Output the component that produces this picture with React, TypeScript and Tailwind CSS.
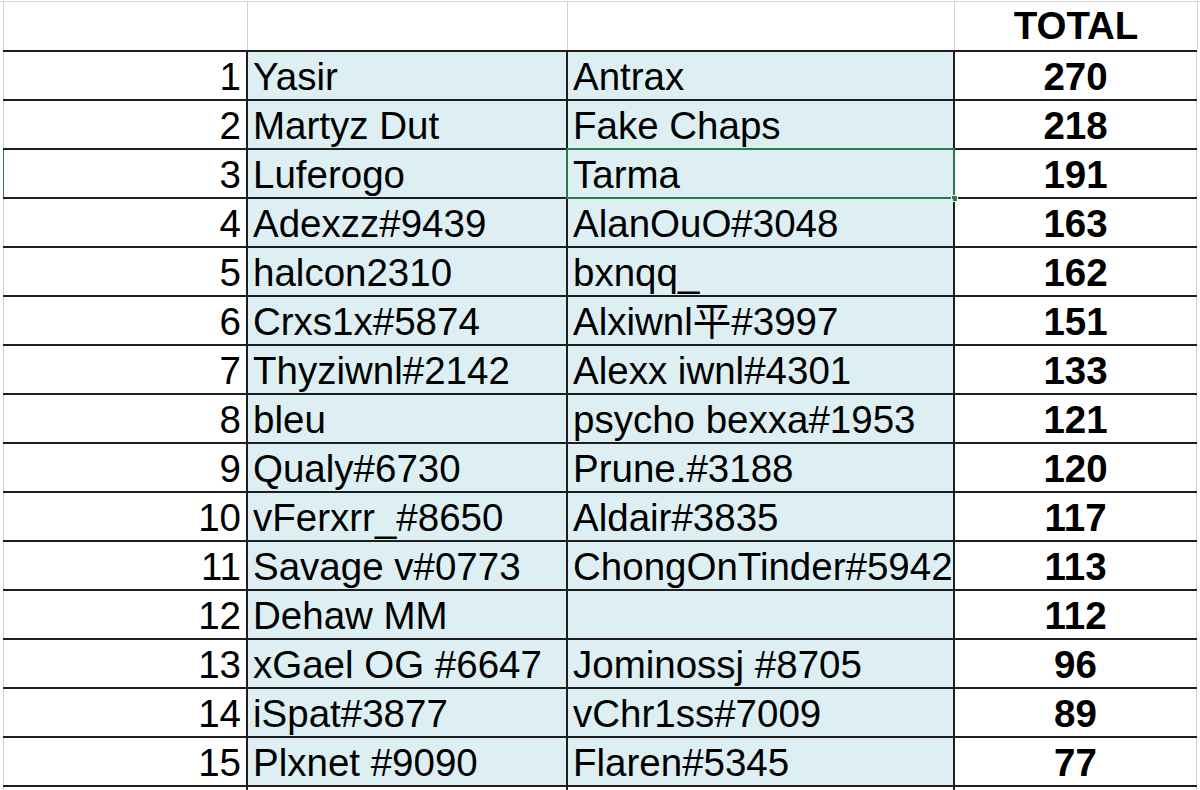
import React from "react";

const rows: [number, string, string, number][] = [
  [1, "Yasir", "Antrax", 270],
  [2, "Martyz Dut", "Fake Chaps", 218],
  [3, "Luferogo", "Tarma", 191],
  [4, "Adexzz#9439", "AlanOuO#3048", 163],
  [5, "halcon2310", "bxnqq_", 162],
  [6, "Crxs1x#5874", "Alxiwnl平#3997", 151],
  [7, "Thyziwnl#2142", "Alexx iwnl#4301", 133],
  [8, "bleu", "psycho bexxa#1953", 121],
  [9, "Qualy#6730", "Prune.#3188", 120],
  [10, "vFerxrr_#8650", "Aldair#3835", 117],
  [11, "Savage v#0773", "ChongOnTinder#5942", 113],
  [12, "Dehaw MM", "", 112],
  [13, "xGael OG #6647", "Jominossj #8705", 96],
  [14, "iSpat#3877", "vChr1ss#7009", 89],
  [15, "Plxnet #9090", "Flaren#5345", 77],
];

function Dark() {
  return <div className="w-[2px] shrink-0 self-stretch bg-[#1e1e1e]" />;
}
function Gray({ green }: { green?: boolean }) {
  return (
    <div
      className={
        "w-[1px] shrink-0 self-stretch " + (green ? "bg-[#2f7a4b]" : "bg-[#d2d2d2]")
      }
    />
  );
}

export default function App() {
  return (
    <div className="w-[1200px] h-[790px] overflow-hidden bg-white text-black text-[38.5px] leading-[49px] font-['Liberation_Sans','Noto_Sans_CJK_SC',Arial,sans-serif]">
      {/* top gray gridline */}
      <div className="h-[1px] bg-white" />
      <div className="h-[1px] bg-[#d6d6d6]" />
      {/* header row */}
      <div className="flex h-[48px] pl-[3px]">
        <Gray />
        <div className="w-[243px] shrink-0" />
        <Gray />
        <div className="w-[319px] shrink-0" />
        <Gray />
        <div className="w-[386px] shrink-0" />
        <Gray />
        <div className="w-[242px] shrink-0 text-center font-bold leading-[47px]">TOTAL</div>
        <Gray />
      </div>
      <div className="ml-[3px] w-[1194px] h-[2px] bg-[#1e1e1e]" />
      {rows.map(([n, a, b, t]) => {
        const sel = n === 3;
        return (
          <div key={n}>
            <div className="flex h-[47px] pl-[3px]">
              <Gray green={sel} />
              <div className="w-[242px] shrink-0 text-right pr-[5px] whitespace-nowrap">{n}</div>
              <Dark />
              <div className="w-[318px] shrink-0 bg-[#ddeff2] pl-[5px] whitespace-nowrap overflow-hidden">
                {a}
              </div>
              <Dark />
              <div className="relative w-[385px] shrink-0 bg-[#ddeff2] pl-[5px] whitespace-nowrap">
                {b}
                {sel && (
                  <>
                    <div className="absolute -left-[2px] -top-[2px] -right-[2px] -bottom-[2px] border-2 border-solid border-[#2f7a4b]" />
                    <div className="absolute -right-[5px] -bottom-[5px] w-[7px] h-[7px] bg-[#2f7a4b] border border-solid border-white" />
                  </>
                )}
              </div>
              <Dark />
              <div className="w-[241px] shrink-0 text-center font-bold">{t}</div>
              <Gray />
            </div>
            <div className="ml-[3px] w-[1194px] h-[2px] bg-[#1e1e1e]" />
          </div>
        );
      })}
      <div className="flex h-[47px] pl-[3px]">
        <Gray />
        <div className="w-[242px] shrink-0" />
        <Dark />
        <div className="w-[318px] shrink-0" />
        <Dark />
        <div className="w-[385px] shrink-0" />
        <Dark />
        <div className="w-[241px] shrink-0" />
        <Gray />
      </div>
    </div>
  );
}
